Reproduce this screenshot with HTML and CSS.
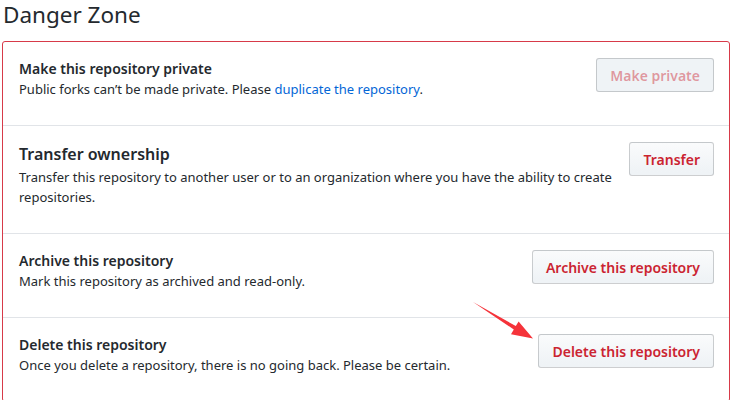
FILE: index.html
```html
<!DOCTYPE html>
<html lang="en">
<head>
    <meta charset="UTF-8">
    <title>Danger Zone</title>
    <link rel="stylesheet" href="styles.css">
</head>
<body>
    <div class="page">
        <h2 class="subhead">Danger Zone</h2>

        <div class="danger-box">
            <!-- Visibility -->
            <div class="danger-row">
                <div class="danger-text">
                    <h4>Make this repository private</h4>
                    <p>Public forks can’t be made private. Please <a href="#">duplicate the repository</a>.</p>
                </div>
                <button class="btn-danger" disabled>Make private</button>
            </div>

            <!-- Transfer -->
            <div class="danger-row transfer">
                <div class="danger-text">
                    <h4>Transfer ownership</h4>
                    <p>Transfer this repository to another user or to an organization where you have the ability to create repositories.</p>
                </div>
                <button class="btn-danger">Transfer</button>
            </div>

            <!-- Archive -->
            <div class="danger-row">
                <div class="danger-text">
                    <h4>Archive this repository</h4>
                    <p>Mark this repository as archived and read-only.</p>
                </div>
                <button class="btn-danger">Archive this repository</button>
            </div>

            <!-- Delete -->
            <div class="danger-row">
                <div class="danger-text">
                    <h4>Delete this repository</h4>
                    <p>Once you delete a repository, there is no going back. Please be certain.</p>
                </div>
                <button class="btn-danger">Delete this repository</button>
            </div>
        </div>

        <!-- annotation arrow pointing at delete button -->
        <svg class="arrow" width="731" height="400" viewBox="0 0 731 400">
            <polygon points="473,302 515.8,326.1 518.6,321.6 533,338.5 511,334.2 513.8,329.5" fill="#f5333a"/>
        </svg>
    </div>
</body>
</html>
```

FILE: styles.css
```css
body {
    margin: 0;
    padding: 0;
    background-color: #ffffff;
    font-family: "Noto Sans", "Open Sans", sans-serif;
    color: #24292e;
}
.page {
    position: relative;
    padding: 0 0 0 2px;
    height: 400px;
    overflow: hidden;
}
.subhead {
    margin: 0 0 11px 0;
    font-size: 22.5px;
    font-weight: 400;
    line-height: 30px;
    padding-left: 1px;
}
.danger-box {
    width: 726px;
    border: 1px solid #d73a49;
    border-radius: 3px;
}
.danger-row {
    display: flex;
    align-items: flex-start;
    padding: 16px 15px 16px 16px;
    border-top: 1px solid #e1e4e8;
}
.danger-row:first-child {
    border-top: none;
}
.danger-text {
    flex: 1;
    margin-right: 16px;
}
.danger-text h4 {
    margin: 0;
    font-size: 14px;
    font-weight: 600;
    line-height: 21px;
}
.danger-text p {
    margin: 0 0 10px 0;
    font-size: 13px;
    line-height: 20px;
}
.danger-text a {
    color: #0366d6;
    text-decoration: none;
}
.transfer h4 {
    font-size: 16px;
    line-height: 25px;
}
.transfer p {
    line-height: 20px;
}
.btn-danger {
    height: 34px;
    padding: 0 13px;
    font-family: inherit;
    font-size: 14px;
    font-weight: 600;
    color: #cb2431;
    background-color: #eff3f6;
    background-image: linear-gradient(-180deg, #fafbfc 0%, #eff3f6 90%);
    border: 1px solid rgba(27, 31, 35, 0.2);
    border-radius: 3px;
    white-space: nowrap;
    cursor: pointer;
}
.btn-danger:disabled {
    color: rgba(203, 36, 49, 0.45);
    background-image: none;
    background-color: #eff3f6;
    cursor: default;
}
.arrow {
    position: absolute;
    left: 0;
    top: 0;
    pointer-events: none;
}
```
